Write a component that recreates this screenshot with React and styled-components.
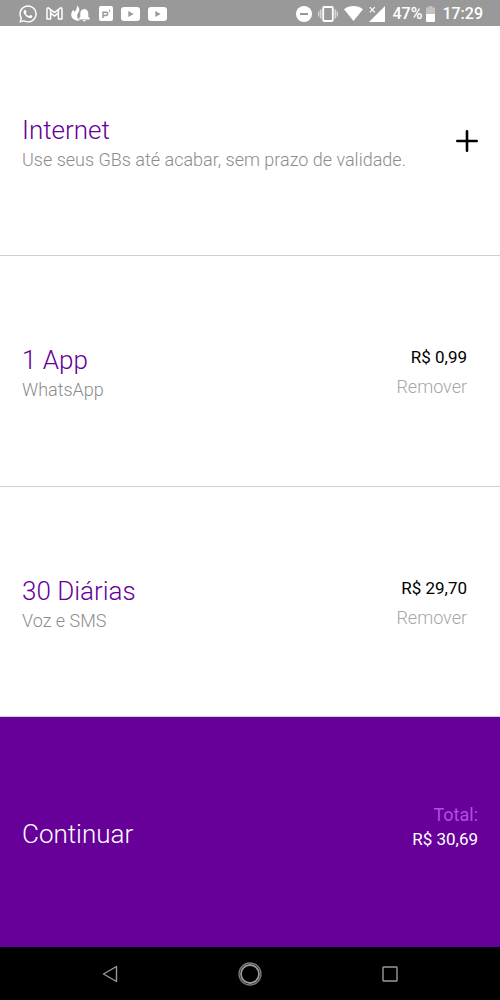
import React from 'react';
import styled, { createGlobalStyle } from 'styled-components';
import { FaWhatsapp } from 'react-icons/fa';

const COLORS = {
    Purple: '#660099',
    Lilac: '#b04fe0',
    Status: '#999999',
    Muted: '#8c8c8c',
    Faint: '#a6a6a6',
    Line: '#cfcfcf',
    Nav: '#9a9a9a'
};

const GlobalStyle = createGlobalStyle`
    * { box-sizing: border-box; }
    body {
        margin: 0;
        background: #fff;
        font-family: Roboto, sans-serif;
    }
    button {
        margin: 0;
        padding: 0;
        border: 0;
        background: none;
        font: inherit;
        color: inherit;
        cursor: pointer;
    }
    svg { display: block; flex: none; }
`;

const Screen = styled.div`
    display: flex;
    flex-direction: column;
    min-height: 100vh;
`;

const StatusBar = styled.header`
    display: flex;
    justify-content: space-between;
    align-items: center;
    height: 26px;
    padding: 1px 17px 0 18px;
    background: ${COLORS.Status};
    color: #fff;
    font-size: 16px;
    font-weight: 500;
    line-height: 24px;
`;

const StatusGroup = styled.div`
    display: flex;
    align-items: center;
    gap: ${props => props.$gap}px;
`;

const Plans = styled.main`
    display: grid;
    flex: 1;
    grid-auto-rows: 1fr;
`;

const PlanRow = styled.section`
    display: flex;
    justify-content: space-between;
    align-items: center;
    padding: 0 22px;
    border-bottom: 1px solid ${COLORS.Line};
`;

const PlanText = styled.div`
    padding-top: 7px;
`;

const Title = styled.h2`
    margin: 0;
    color: ${COLORS.Purple};
    font-size: 26px;
    font-weight: 300;
    line-height: 32px;
`;

const Detail = styled.p`
    margin: 0;
    color: ${COLORS.Muted};
    font-size: 18px;
    font-weight: 300;
    line-height: 28px;
`;

const PlanPrice = styled.div`
    display: flex;
    flex-direction: column;
    align-items: flex-end;
    padding: 3px 11px 0 0;
`;

const Amount = styled.span`
    font-size: 17px;
    line-height: ${props => props.$line}px;
`;

const RemoveButton = styled.button`
    && {
        color: ${COLORS.Faint};
        font-size: 18px;
        font-weight: 300;
        line-height: 30px;
    }
`;

const Checkout = styled.button`
    && {
        display: flex;
        justify-content: space-between;
        align-items: center;
        padding: 0 22px;
        background: ${COLORS.Purple};
        color: #fff;
    }
`;

const CheckoutLabel = styled.span`
    padding-top: 4px;
    font-size: 26px;
    font-weight: 300;
    line-height: 32px;
`;

const CheckoutTotal = styled.span`
    display: flex;
    flex-direction: column;
    align-items: flex-end;
    padding-bottom: 10px;
`;

const TotalLabel = styled.span`
    color: ${COLORS.Lilac};
    font-size: 18px;
    line-height: 24px;
`;

const NavBar = styled.nav`
    display: flex;
    justify-content: center;
    align-items: center;
    height: 53px;
    background: #000;
    color: ${COLORS.Nav};
`;

const NavButton = styled.button`
    && {
        display: flex;
        justify-content: center;
        flex: 0 0 28%;
    }
`;

const GmailIcon = () => (
    <svg width="17" height="13" viewBox="0 0 17 13" fill="none" stroke="#fff" strokeWidth="1.5" strokeLinejoin="round">
        <path d="M1 2.2Q1 .8 2.4.8L8.5 5.6 14.6.8Q16 .8 16 2.2V12H12.4V6.2L8.5 9.2 4.6 6.2V12H1Z" />
        <path d="M4.6 2.6V6.2M12.4 2.6V6.2" />
    </svg>
);

const FlameBellIcon = () => (
    <svg width="19" height="17" viewBox="0 0 19 17" fill="#fff">
        <path d="M6 .5C8.3 2.3 8.9 4.4 8 6.6L6.2 9.8 6.4 12.8 8.5 15.8C3.8 16 .2 13.4.2 9.8 .2 7.7 1.2 6 2.4 4.8L3.5 7C5.2 5.2 6.2 2.9 6 .5Z" />
        <path d="M13.3 4C16 4.4 17.3 6.1 17.3 8.5V11.7L18.8 13.4V14.4H7.8V13.4L9.3 11.7V8.5C9.3 6.1 10.6 4.4 13.3 4ZM12 14.9H14.7Q14.4 16.4 13.3 16.4T12 14.9Z" />
    </svg>
);

const ParkingIcon = () => (
    <svg width="15" height="15" viewBox="0 0 15 15">
        <rect x="1" width="14" height="15" rx="2" fill="#fff" />
        <path d="M5 12V6.2H8Q9.8 6.2 9.6 7.8T8 9.4H5.6" fill="none" stroke={COLORS.Status} strokeWidth="1.5" />
        <path d="M11.6 3.5V6" stroke={COLORS.Status} strokeWidth="1" />
    </svg>
);

const VideoIcon = () => (
    <svg width="19" height="14" viewBox="0 0 19 14">
        <rect width="19" height="14" rx="3" fill="#fff" />
        <path d="M7.3 4.1 12.6 7 7.3 9.9Z" fill={COLORS.Status} />
    </svg>
);

const DoNotDisturbIcon = () => (
    <svg width="16" height="16" viewBox="0 0 16 16">
        <circle cx="8" cy="8" r="8" fill="#fff" />
        <path d="M4 8H12" stroke={COLORS.Status} strokeWidth="2" />
    </svg>
);

const VibrateIcon = () => (
    <svg width="20" height="16" viewBox="0 0 20 16" fill="none" stroke="#fff">
        <rect x="5.2" y="1" width="9.6" height="14" rx="1" strokeWidth="1.8" />
        <path d="M2.7 3.5V12.5M17.3 3.5V12.5" strokeWidth="1.7" opacity=".6" />
        <path d="M.7 5.5V10.5M19.3 5.5V10.5" strokeWidth="1.3" opacity=".6" />
    </svg>
);

const WifiIcon = () => (
    <svg width="19" height="15" viewBox="0 0 19 15" fill="#fff">
        <path d="M0 3.2C5.5-1 13.5-1 19 3.2L9.5 15Z" />
    </svg>
);

const SignalIcon = () => (
    <svg width="16" height="16" viewBox="0 0 16 16">
        <path d="M16 0V16H0L5.5 10.5 8 8Z" fill="#fff" />
        <path d="M.8 1.2 5.8 6.4M5.8 1.2.8 6.4" stroke="#fff" strokeWidth="1.2" />
    </svg>
);

const BatteryIcon = () => (
    <svg width="9" height="16" viewBox="0 0 9 16" fill="#fff">
        <path d="M2.5 0H6.5V1.5H9V8H0V1.5H2.5Z" opacity=".4" />
        <path d="M0 8H9V15Q9 16 8 16H1Q0 16 0 15Z" />
    </svg>
);

const PlusIcon = () => (
    <svg width="22" height="22" viewBox="0 0 22 22" stroke="#000" strokeWidth="2.6" strokeLinecap="round">
        <path d="M11 1.3V20.7M1.3 11H20.7" />
    </svg>
);

const Plan = ({ title, detail, price }) => (
    <PlanRow>
        <PlanText>
            <Title>{title}</Title>
            <Detail>{detail}</Detail>
        </PlanText>
        {price ? (
            <PlanPrice>
                <Amount $line={30}>{price}</Amount>
                <RemoveButton type="button">Remover</RemoveButton>
            </PlanPrice>
        ) : (
            <button type="button" aria-label="Adicionar"><PlusIcon /></button>
        )}
    </PlanRow>
);

export default function App() {
    return (
        <Screen>
            <GlobalStyle />
            <StatusBar>
                <StatusGroup $gap={8}>
                    <FaWhatsapp size={20} />
                    <GmailIcon />
                    <FlameBellIcon />
                    <ParkingIcon />
                    <VideoIcon />
                    <VideoIcon />
                </StatusGroup>
                <StatusGroup $gap={7}>
                    <StatusGroup $gap={6}>
                        <DoNotDisturbIcon />
                        <VibrateIcon />
                        <WifiIcon />
                        <SignalIcon />
                    </StatusGroup>
                    <StatusGroup $gap={4}>
                        <span>47%</span>
                        <BatteryIcon />
                    </StatusGroup>
                    <span>17:29</span>
                </StatusGroup>
            </StatusBar>

            <Plans>
                <Plan title="Internet" detail="Use seus GBs até acabar, sem prazo de validade." />
                <Plan title="1 App" detail="WhatsApp" price="R$ 0,99" />
                <Plan title="30 Diárias" detail="Voz e SMS" price="R$ 29,70" />
                <Checkout type="button">
                    <CheckoutLabel>Continuar</CheckoutLabel>
                    <CheckoutTotal>
                        <TotalLabel>Total:</TotalLabel>
                        <Amount $line={24}>R$ 30,69</Amount>
                    </CheckoutTotal>
                </Checkout>
            </Plans>

            <NavBar>
                <NavButton type="button" aria-label="Voltar">
                    <svg width="16" height="18" viewBox="0 0 16 18" fill="none" stroke="currentColor" strokeWidth="1.4" strokeLinejoin="round">
                        <path d="M14.5 1.5V16.5L1.5 9Z" />
                    </svg>
                </NavButton>
                <NavButton type="button" aria-label="Início">
                    <svg width="24" height="24" viewBox="0 0 24 24" fill="none" stroke="currentColor">
                        <circle cx="12" cy="12" r="11" strokeWidth="1.3" opacity=".8" />
                        <circle cx="12" cy="12" r="9" strokeWidth="1.8" />
                    </svg>
                </NavButton>
                <NavButton type="button" aria-label="Recentes">
                    <svg width="16" height="16" viewBox="0 0 16 16" fill="none" stroke="currentColor" strokeWidth="1.4">
                        <rect x="1" y="1" width="14" height="14" rx=".5" />
                    </svg>
                </NavButton>
            </NavBar>
        </Screen>
    );
}
